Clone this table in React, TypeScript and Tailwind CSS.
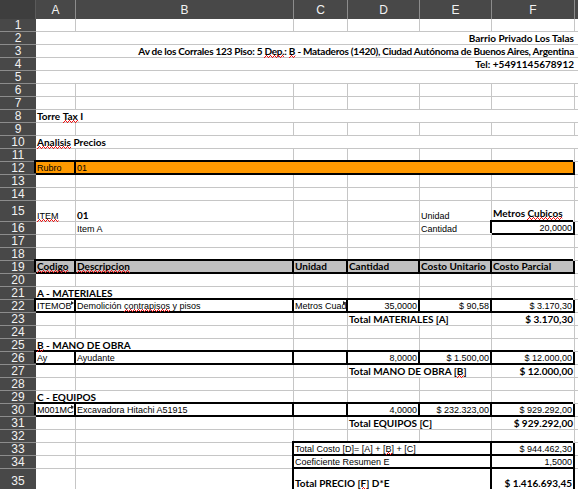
import React from "react";

const GL = "border-r border-b border-[#c6c6c6]";
const BX = "border-r-2 border-b-2 border-black shadow-[-2px_-2px_0_0_#000]";
const BOLD = "font-['Lato'] font-bold text-[10px] leading-[11px]";
const REG = "font-['Liberation_Sans'] text-[9px] leading-[9px]";

function Sq({ children }: { children: React.ReactNode }) {
  return (
    <span className="relative inline-block">
      {children}
      <svg className="absolute left-0 top-[calc(100%-2px)] z-10 h-[3px] w-full overflow-visible">
        <rect x="0" y="0" width="100%" height="3" fill="url(#sqw)" />
      </svg>
    </span>
  );
}

type CP = {
  cls?: string;
  f?: string;
  right?: boolean;
  mark?: boolean;
  clip?: boolean;
  children?: React.ReactNode;
};

function Cell({ cls = GL, f = REG, right, mark, clip, children }: CP) {
  return (
    <div
      className={`relative flex items-end whitespace-nowrap text-black ${
        clip ? "overflow-hidden" : ""
      } ${right ? "justify-end pr-px" : "pl-px"} ${f} ${cls}`}
    >
      <span className="whitespace-pre">{children}</span>
      {mark && (
        <span className="absolute right-0 top-[1px] h-0 w-0 border-y-[2px] border-l-[3px] border-y-transparent border-l-[#222]" />
      )}
    </div>
  );
}

function RH({ n }: { n: number }) {
  return (
    <div className="flex items-center justify-center border-b border-[#8c8c8c] bg-[#484848] font-['Liberation_Sans'] text-[12px] leading-none text-[#f2f2f2]">
      {n}
    </div>
  );
}

const E = () => <div className={GL} />;
const X = () => <div className="border-b border-[#c6c6c6]" />;

function Row({ n, children }: { n: number; children: React.ReactNode }) {
  return (
    <>
      <RH n={n} />
      {children}
      <X />
    </>
  );
}

function Empty({ n }: { n: number }) {
  return (
    <Row n={n}>
      <E />
      <E />
      <E />
      <E />
      <E />
      <E />
    </Row>
  );
}

function ColHead({ l }: { l: string }) {
  return (
    <div className="flex items-center justify-center border-r border-[#8c8c8c] bg-[#484848] font-['Liberation_Sans'] text-[12px] leading-none text-[#f2f2f2]">
      {l}
    </div>
  );
}

export default function App() {
  return (
    <div className="relative h-[489px] w-[578px] overflow-hidden bg-white">
      <svg className="absolute left-0 top-0 h-0 w-0">
        <defs>
          <pattern id="sqw" x="0" y="0" width="4" height="3" patternUnits="userSpaceOnUse">
            <rect x="0" y="2" width="1" height="1" fill="#f01010" />
            <rect x="1" y="1" width="1" height="1" fill="#f01010" />
            <rect x="2" y="0" width="1" height="1" fill="#f01010" />
            <rect x="3" y="1" width="1" height="1" fill="#f01010" />
          </pattern>
        </defs>
      </svg>
      <div className="grid grid-cols-[36px_40px_218px_54px_72px_72px_83px_3px] grid-rows-[19px_repeat(14,13px)_21px_repeat(19,13px)_24px]">
        {/* column header */}
        <div className="border-r border-[#5a5a5a] bg-[#3e3e3e]" />
        <ColHead l="A" />
        <ColHead l="B" />
        <ColHead l="C" />
        <ColHead l="D" />
        <ColHead l="E" />
        <ColHead l="F" />
        <div className="bg-[#484848]" />

        <Empty n={1} />
        <Row n={2}>
          <Cell cls="col-span-6 border-b border-[#c6c6c6] pr-[2px]" f={BOLD} right>
            Barrio Privado Los Talas
          </Cell>
        </Row>
        <Row n={3}>
          <Cell cls="col-span-6 border-b border-[#c6c6c6] pr-[2px] tracking-[-0.25px]" f={BOLD} right>
            {"Av de los Corrales 123 Piso: 5 "}
            <Sq>Dep.</Sq>
            {": "}
            <Sq>B</Sq>
            {" - Mataderos (1420), Ciudad Autónoma de Buenos Aires, Argentina"}
          </Cell>
        </Row>
        <Row n={4}>
          <Cell cls="col-span-6 border-b border-[#c6c6c6] pr-[2px]" f={BOLD} right>
            Tel: +5491145678912
          </Cell>
        </Row>
        <Row n={5}>
          <Cell cls="col-span-6 border-b border-[#c6c6c6]" />
        </Row>
        <Empty n={6} />
        <Empty n={7} />
        <Row n={8}>
          <Cell cls="col-span-6 border-b border-[#c6c6c6]" f={BOLD}>
            {"Torre "}
            <Sq>Tax</Sq>
            {" I"}
          </Cell>
        </Row>
        <Empty n={9} />
        <Row n={10}>
          <Cell cls="col-span-6 border-b border-[#c6c6c6]" f={BOLD}>
            <Sq>Analisis</Sq>
            {" Precios"}
          </Cell>
        </Row>
        <Empty n={11} />
        <Row n={12}>
          <Cell cls={`${BX} bg-[#ff9900] text-[#2a2000]`}>Rubro</Cell>
          <Cell cls={`col-span-5 ${BX} bg-[#ff9900]`}>01</Cell>
        </Row>
        <Empty n={13} />
        <Empty n={14} />
        <Row n={15}>
          <Cell>
            <Sq>ITEM</Sq>
          </Cell>
          <Cell f={BOLD}>01</Cell>
          <E />
          <E />
          <Cell>Unidad</Cell>
          <Cell f={BOLD} cls={`${GL} pb-[2px]`}>
            {"Metros "}
            <Sq>Cubicos</Sq>
          </Cell>
        </Row>
        <Row n={16}>
          <E />
          <Cell>Item A</Cell>
          <E />
          <E />
          <Cell>Cantidad</Cell>
          <Cell cls={BX} right>
            20,0000
          </Cell>
        </Row>
        <Empty n={17} />
        <Empty n={18} />
        <Row n={19}>
          <Cell cls={`${BX} bg-[#c0c0c0]`} f={BOLD}>
            <Sq>Codigo</Sq>
          </Cell>
          <Cell cls={`${BX} bg-[#c0c0c0]`} f={BOLD}>
            <Sq>Descripcion</Sq>
          </Cell>
          <Cell cls={`${BX} bg-[#c0c0c0]`} f={BOLD}>
            Unidad
          </Cell>
          <Cell cls={`${BX} bg-[#c0c0c0]`} f={BOLD}>
            Cantidad
          </Cell>
          <Cell cls={`${BX} bg-[#c0c0c0]`} f={BOLD}>
            Costo Unitario
          </Cell>
          <Cell cls={`${BX} bg-[#c0c0c0]`} f={BOLD}>
            Costo Parcial
          </Cell>
        </Row>
        <Empty n={20} />
        <Row n={21}>
          <Cell cls={`col-span-2 ${GL}`} f={BOLD}>
            A - MATERIALES
          </Cell>
          <E />
          <E />
          <E />
          <E />
        </Row>
        <Row n={22}>
          <Cell cls={BX} mark clip>
            ITEMOB
          </Cell>
          <Cell cls={BX}>
            {"Demolición "}
            <Sq>contrapisos</Sq>
            {" y pisos"}
          </Cell>
          <Cell cls={BX} mark clip>
            Metros Cuad
          </Cell>
          <Cell cls={BX} right>
            35,0000
          </Cell>
          <Cell cls={BX} right>
            $ 90,58
          </Cell>
          <Cell cls={BX} right>
            $ 3.170,30
          </Cell>
        </Row>
        <Row n={23}>
          <E />
          <E />
          <E />
          <Cell cls={`col-span-2 ${GL}`} f={BOLD}>
            Total MATERIALES [A]
          </Cell>
          <Cell f={BOLD} right>
            $ 3.170,30
          </Cell>
        </Row>
        <Empty n={24} />
        <Row n={25}>
          <Cell cls={`col-span-2 ${GL}`} f={BOLD}>
            <Sq>B</Sq>
            {" - MANO DE OBRA"}
          </Cell>
          <E />
          <E />
          <E />
          <E />
        </Row>
        <Row n={26}>
          <Cell cls={BX}>Ay</Cell>
          <Cell cls={BX}>Ayudante</Cell>
          <Cell cls={BX} />
          <Cell cls={BX} right>
            8,0000
          </Cell>
          <Cell cls={BX} right>
            $ 1.500,00
          </Cell>
          <Cell cls={BX} right>
            $ 12.000,00
          </Cell>
        </Row>
        <Row n={27}>
          <E />
          <E />
          <E />
          <Cell cls={`col-span-2 ${GL}`} f={BOLD}>
            {"Total MANO DE OBRA ["}
            <Sq>B</Sq>
            {"]"}
          </Cell>
          <Cell f={BOLD} right>
            $ 12.000,00
          </Cell>
        </Row>
        <Empty n={28} />
        <Row n={29}>
          <Cell cls={`col-span-2 ${GL}`} f={BOLD}>
            C - EQUIPOS
          </Cell>
          <E />
          <E />
          <E />
          <E />
        </Row>
        <Row n={30}>
          <Cell cls={BX} mark clip>
            M001MC
          </Cell>
          <Cell cls={BX}>Excavadora Hitachi A51915</Cell>
          <Cell cls={BX} />
          <Cell cls={BX} right>
            4,0000
          </Cell>
          <Cell cls={BX} right>
            $ 232.323,00
          </Cell>
          <Cell cls={BX} right>
            $ 929.292,00
          </Cell>
        </Row>
        <Row n={31}>
          <E />
          <E />
          <E />
          <Cell cls={`col-span-2 ${GL}`} f={BOLD}>
            Total EQUIPOS [C]
          </Cell>
          <Cell f={BOLD} right>
            $ 929.292,00
          </Cell>
        </Row>
        <Empty n={32} />
        <Row n={33}>
          <E />
          <E />
          <Cell cls={`col-span-3 ${BX}`}>
            {"Total Costo [D]= [A] + ["}
            <Sq>B</Sq>
            {"] + [C]"}
          </Cell>
          <Cell cls={BX} right>
            $ 944.462,30
          </Cell>
        </Row>
        <Row n={34}>
          <E />
          <E />
          <Cell cls={`col-span-3 ${BX}`}>Coeficiente Resumen E</Cell>
          <Cell cls={BX} right>
            1,5000
          </Cell>
        </Row>
        <Row n={35}>
          <E />
          <E />
          <Cell cls={`col-span-3 ${BX} pb-[2px]`} f={BOLD}>
            {"Total PRECIO ["}
            <Sq>F</Sq>
            {"] D*E"}
          </Cell>
          <Cell cls={`${BX} pb-[2px]`} f={BOLD} right>
            $ 1.416.693,45
          </Cell>
        </Row>
      </div>
    </div>
  );
}
